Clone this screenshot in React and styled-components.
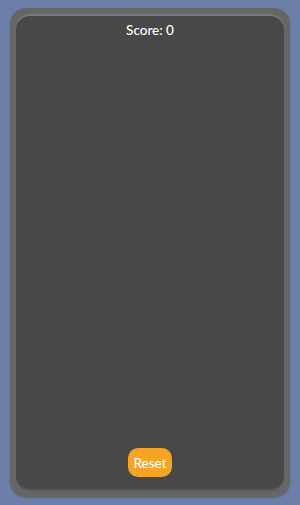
import React, { useState } from 'react';
import styled, { createGlobalStyle } from 'styled-components';

const GlobalStyle = createGlobalStyle`
  html, body {
    margin: 0;
    padding: 0;
    background-color: #6b7fa9;
    font-family: Lato, "Open Sans", sans-serif;
  }
`;

const Page = styled.div`
  padding: 8px 10px;
  height: 505px;
  box-sizing: border-box;
`;

const Frame = styled.div`
  background-color: #666666;
  border-radius: 16px;
  padding: 6px;
  height: 489px;
  box-sizing: border-box;
  box-shadow: 0 1px 2px rgba(0, 0, 0, 0.2);
`;

const Board = styled.div`
  background-color: #484848;
  border-radius: 14px;
  height: 100%;
  display: flex;
  flex-direction: column;
  align-items: center;
  justify-content: space-between;
  box-shadow: inset 0 2px 0 #7a7a7a, inset 0 -2px 0 #5a5a5a;
  box-sizing: border-box;
  padding: 8px 0 14px;
`;

const Score = styled.div`
  color: #ffffff;
  font-size: 13.5px;
  line-height: 16px;
  font-weight: 500;
`;

const ResetButton = styled.button`
  background-color: #f5a425;
  color: #ffffff;
  border: none;
  border-radius: 10px;
  font-family: Lato, sans-serif;
  font-size: 13.5px;
  font-weight: 500;
  padding: 0 5px;
  height: 29px;
  cursor: pointer;
`;

function App() {
    const [score, setScore] = useState(0);

    return (
        <Page>
            <GlobalStyle />
            <Frame>
                <Board>
                    <Score>Score: {score}</Score>
                    <ResetButton onClick={() => setScore(0)}>Reset</ResetButton>
                </Board>
            </Frame>
        </Page>
    );
}

export default App;
